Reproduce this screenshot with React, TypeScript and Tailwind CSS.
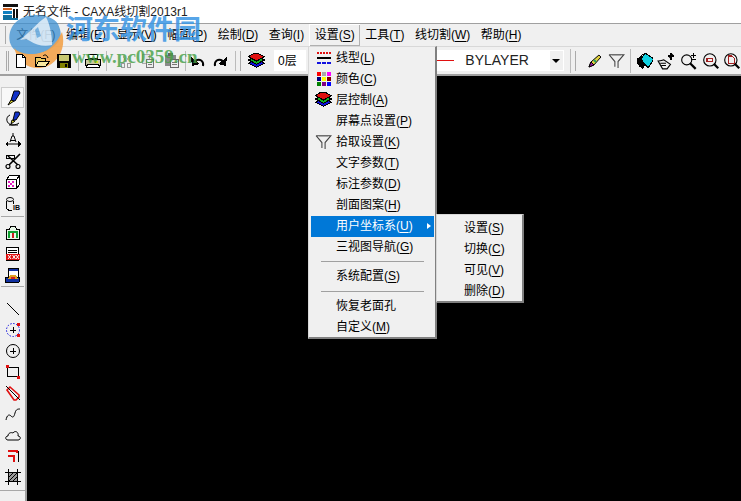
import React from 'react';

const font = { fontFamily: '"Liberation Sans", "Noto Sans CJK SC", sans-serif' };

// 16x16 toolbar glyphs, hand drawn from the screenshot
const Ico: React.FC<{ children: React.ReactNode; size?: number }> = ({ children, size = 16 }) => (
  <svg width={size} height={size} viewBox="0 0 16 16" fill="none" shapeRendering="crispEdges" className="block">
    {children}
  </svg>
);

const Layers = () => (
  <Ico size={17}>
    <path d="M0.5 10.5 8 14.5l7.5-4-3-1.5h-9z" fill="#1010e0" stroke="#000" />
    <path d="M0.5 7.5 8 11.5l7.5-4-3-1.5h-9z" fill="#10b020" stroke="#000" />
    <path d="M0.5 4.5 5 1.5h5l5.5 3L8 8.5z" fill="#e01010" stroke="#000" />
  </Ico>
);

const Funnel = () => (
  <Ico size={17}>
    <path d="M1 2.5h14L9.5 9v6M1 2.5 6.5 9v5" stroke="#444" shapeRendering="auto" />
    <path d="M3.5 3.5h9" stroke="#aaa" />
  </Ico>
);

const toolbarLeft = [
  <Ico key="new"><path d="M3.5 1.5h6l3 3v10h-9z" fill="#fff" stroke="#000" /><path d="M9.5 1.5v3h3" stroke="#000" /></Ico>,
  <Ico key="open"><path d="M1.5 4.5h5l1 1h4v8h-10z" fill="#e8c860" stroke="#000" /><path d="M4.5 8.5h11l-4 5h-10z" fill="#f8e8a0" stroke="#000" /><path d="M9 3c2-2 4-1 5 2" stroke="#000" shapeRendering="auto" /></Ico>,
  <Ico key="save"><path d="M1 1h14v14H1z" fill="#000" /><path d="M3 2h10v6H3z" fill="#c8c870" /><path d="M4 10h8v5H4z" fill="#808000" /><path d="M9 11h2v3H9z" fill="#000" /></Ico>,
];

const toolbarDim = [
  <Ico key="cut"><path d="M6 3l3 6M12 3 9 9" stroke="#b0b0b0" /><path d="M4 10h3v4H4zM10 10h3v4h-3z" stroke="#999" /></Ico>,
  <Ico key="copy"><path d="M2.5 1.5h7v9h-7z" fill="#e4e4e4" stroke="#aaa" /><path d="M6.5 6.5h7v8h-7z" fill="#eee" stroke="#777" /><path d="M8 9h4M8 11h4" stroke="#777" /></Ico>,
  <Ico key="paste"><path d="M1 2h11v11H1z" fill="#8a8a8a" /><path d="M6.5 6.5h8v8h-8z" fill="#eee" stroke="#666" /><path d="M4 0h5v3H4z" fill="#666" /><path d="M8 9h5M8 11h5" stroke="#777" /></Ico>,
];

const sideTop = [
  <Ico key="a"><path d="M9 1h5l1 2-5 8H6l1-4z" fill="#1030c8" stroke="#000" shapeRendering="auto" /><path d="M6 10l3 1-6 4z" fill="#f0e830" stroke="#000" shapeRendering="auto" /></Ico>,
  <Ico key="b"><path d="M5 4c-5 2-4 9 2 10 3 0 6-1 7-2M4 14h9" stroke="#000" shapeRendering="auto" /><path d="M10 1h4l1 2-4 6H8l1-4z" fill="#1030c8" stroke="#000" shapeRendering="auto" /><path d="M7 9l3 1-4 3z" fill="#f0e830" stroke="#000" shapeRendering="auto" /></Ico>,
  <Ico key="c"><path d="M5 10l2-6h2l2 6M5.5 8.5h5M8 1v3M1 12h14" stroke="#000" shapeRendering="auto" /><path d="M0 12l3-3v6zM16 12l-3-3v6z" fill="#000" /></Ico>,
  <Ico key="d"><path d="M1.5 2.5h8v3h-8z" stroke="#000" /><path d="M15 1 4 12M3 3l10 9" stroke="#000" strokeWidth="1.6" shapeRendering="auto" /><circle cx="3" cy="13.5" r="2" stroke="#000" strokeWidth="1.2" shapeRendering="auto" /><circle cx="13" cy="13.5" r="2" stroke="#000" strokeWidth="1.2" shapeRendering="auto" /></Ico>,
  <Ico key="e"><path d="M1.5 5.5h10v9h-10zM1.5 5.5l3-4h10v9l-3 4M11.5 5.5l3-4" fill="#fff" stroke="#000" /><path d="M1 5h11v10H1z" fill="#fff" /><path d="M1.5 5.5h10v9h-10z" stroke="#000" /><path d="M3 7h2v2H3zM7 7h2v2H7zM3 11h2v2H3zM7 11h2v2H7zM5 9h2v2H5z" fill="#e020c0" /></Ico>,
  <Ico key="f">
    <path d="M1.5 4.5v8l2 1.5h3M8.5 4.5V8" stroke="#000" />
    <ellipse cx="5" cy="3.5" rx="3.5" ry="2" stroke="#000" shapeRendering="auto" />
    <text x="8" y="14" fontSize="7" fontWeight="bold" fill="#000" fontFamily="Liberation Sans">IB</text>
  </Ico>,
];

const sideMid = [
  <Ico key="g"><path d="M1.5 4.5h3l1-3h5l1 3h3v10h-13z" fill="#e8f8e8" stroke="#000" /><path d="M3.5 13V6.5h8V13" stroke="#10a030" strokeWidth="2" /><path d="M7 8h2v5H7z" fill="#d02020" /></Ico>,
  <Ico key="h"><path d="M1.5 1.5h12v13h-12z" fill="#fff" stroke="#000" /><path d="M3 4h9M3 6h9" stroke="#000" /><path d="M1 8h14v6H1z" fill="#e01010" /><path d="M3 9l3 4M6 9l-3 4M7.5 9l3 4M10.5 9l-3 4M11 9l3 4M14 9l-3 4" stroke="#fff" shapeRendering="auto" /></Ico>,
  <Ico key="i"><path d="M3.5 1.5h10v10h-10z" fill="#fff" stroke="#000" /><path d="M4 2h9v2H4z" fill="#1030a0" /><path d="M1 10h14l-1 5H0z" fill="#1030a0" stroke="#000" /><path d="M5 8h6l2 4H3z" fill="#e0a020" /><path d="M6 10h4v2H6z" fill="#d02020" /></Ico>,
];

const sideBottom = [
  <Ico key="j"><path d="M2 2l12 12" stroke="#000" shapeRendering="auto" /></Ico>,
  <Ico key="k"><circle cx="8" cy="8" r="6.5" stroke="#1010e0" strokeDasharray="1.5 1.5" shapeRendering="auto" /><path d="M5 8h6M8 5v6" stroke="#000" /><path d="M12 1h3v3h-3zM12 12h3v3h-3z" fill="#e01010" /></Ico>,
  <Ico key="l"><circle cx="8" cy="8" r="6.5" stroke="#000" shapeRendering="auto" /><path d="M5 8h6M8 5v6" stroke="#000" /></Ico>,
  <Ico key="m"><path d="M2.5 3.5h11v9h-11z" stroke="#000" /><path d="M1 1h3v3H1zM12 12h3v3h-3z" fill="#e01010" /></Ico>,
  <Ico key="n"><path d="M2 5l3-3 9 8v2l-3 3h-2z" stroke="#e01010" strokeWidth="1.6" shapeRendering="auto" /><path d="M1 1l14 14" stroke="#000" shapeRendering="auto" /></Ico>,
  <Ico key="o"><path d="M1 14c1-5 3-6 5-4s3 1 4-3 3-4 5-4" stroke="#000" shapeRendering="auto" /></Ico>,
  <Ico key="p"><path d="M3 13c-3 0-3-4 0-4 0-3 3-4 5-3 2-3 6-1 5 3 3 0 3 4 0 4z" stroke="#000" shapeRendering="auto" /></Ico>,
  <Ico key="q"><path d="M3 3.5h10.5V14" stroke="#000" /><path d="M3 3h9v2M3 8h6v6" stroke="#e01010" strokeWidth="2" /></Ico>,
  <Ico key="r"><path d="M3.5 0v16M12.5 0v16M0 3.5h16M0 12.5h16" stroke="#000" /><path d="M4 4h8v8H4z" fill="#999" /><path d="M4 8l4-4M4 12l8-8M8 12l4-4" stroke="#000" shapeRendering="auto" /></Ico>,
];

const menuBar = [
  ['文件(', 'F', ')'],
  ['编辑(', 'E', ')'],
  ['显示(', 'V', ')'],
  ['幅面(', 'P', ')'],
  ['绘制(', 'D', ')'],
  ['查询(', 'I', ')'],
  ['设置(', 'S', ')'],
  ['工具(', 'T', ')'],
  ['线切割(', 'W', ')'],
  ['帮助(', 'H', ')'],
];

const Swatches = () => (
  <div className="grid grid-cols-3 gap-[1px] w-[14px] h-[14px]">
    {['bg-[#ff0000]', 'bg-[#a8a8a8]', 'bg-[#ff00ff]', 'bg-[#000080]', 'bg-[#ffff00]', 'bg-[#800000]', 'bg-[#008000]', 'bg-[#800080]', 'bg-[#0000ff]'].map((c, i) => (
      <div key={i} className={c} />
    ))}
  </div>
);

const LineType = () => (
  <Ico>
    <path d="M1 3h14" stroke="#e01010" strokeWidth="2" strokeDasharray="2 1" />
    <path d="M1 8h14" stroke="#000" strokeWidth="2" />
    <path d="M1 13h14" stroke="#1010e0" strokeWidth="2" strokeDasharray="4 1" />
  </Ico>
);

type Row = { t?: string; k?: string; icon?: React.ReactNode; sel?: boolean; sep?: boolean };

const settings: Row[] = [
  { t: '线型(', k: 'L', icon: <LineType /> },
  { t: '颜色(', k: 'C', icon: <Swatches /> },
  { t: '层控制(', k: 'A', icon: <Layers /> },
  { t: '屏幕点设置(', k: 'P' },
  { t: '拾取设置(', k: 'K', icon: <Funnel /> },
  { t: '文字参数(', k: 'T' },
  { t: '标注参数(', k: 'D' },
  { t: '剖面图案(', k: 'H' },
  { t: '用户坐标系(', k: 'U', sel: true },
  { t: '三视图导航(', k: 'G' },
  { sep: true },
  { t: '系统配置(', k: 'S' },
  { sep: true },
  { t: '恢复老面孔' },
  { t: '自定义(', k: 'M' },
];

const coords = [
  ['设置(', 'S'],
  ['切换(', 'C'],
  ['可见(', 'V'],
  ['删除(', 'D'],
];

const Label: React.FC<{ t: string; k?: string }> = ({ t, k }) => (
  <span>
    {t}
    {k && (
      <>
        <span className="underline underline-offset-2">{k}</span>)
      </>
    )}
  </span>
);

const App: React.FC = () => {
  return (
    <div className="relative w-[741px] h-[501px] overflow-hidden bg-white flex flex-col text-[12px] text-black" style={font}>
      {/* title bar */}
      <div className="h-[23px] flex items-center pl-[3px] gap-[5px] text-[#222]">
        <svg width="15" height="16" viewBox="0 0 15 16" shapeRendering="crispEdges">
          <path d="M0 0h15v3H0z" fill="#111" />
          <path d="M0 4h9v2H0z" fill="#d06020" />
          <path d="M0 7h9v3H0z" fill="#1080c0" />
          <path d="M0 11h9v3H0zM0 14h15v2H0z" fill="#1070a0" />
          <path d="M10 5h2v9h-2zM13 5h2v9h-2z" fill="#111" />
        </svg>
        <span>无名文件 - CAXA线切割2013r1</span>
      </div>
      <div className="h-px bg-[#a0a0a0]" />

      {/* menu bar */}
      <div className="h-[23px] bg-[#f0f0f0] border-b border-[#d8d8d8] flex items-center pl-[5px]">
        <div className="w-[2px] h-[18px] border-l border-[#aaa] mr-[4px]" />
        {menuBar.map(([a, k, b]) => (
          <div key={k + a} className={`px-[5.25px] h-[22px] flex items-center whitespace-nowrap ${k === 'S' ? 'shadow-[inset_1px_1px_0_#fff,inset_-1px_-1px_0_#b0b0b0]' : ''}`}>
            <span>{a}<span className="underline underline-offset-2">{k}</span>{b}</span>
          </div>
        ))}
      </div>

      {/* toolbar */}
      <div className="h-[29px] bg-[#f0f0f0] border-b-[2px] border-[#a0a0a0] flex items-center pl-[6px]">
        <div className="w-[3px] h-[20px] border-l border-[#aaa] border-r mr-[1px]" />
        {toolbarLeft.map((x, i) => <div key={i} className="relative z-10 w-[21.5px] flex justify-center">{x}</div>)}
        <div className="w-px h-[20px] bg-[#bbb] mx-[3.5px]" />
        <div className="w-[22px] flex justify-center">
          <Ico size={18}><path d="M4 2h8v4H4z" fill="#fff" stroke="#000" /><path d="M1 7h14v5H1z" fill="#c8c8a0" stroke="#000" /><path d="M3 11h10l1 3H2z" fill="#fff" stroke="#000" /><path d="M9 8h3v2H9z" fill="#e0e020" /></Ico>
        </div>
        <div className="w-px h-[20px] bg-[#bbb] ml-[2px] mr-[3px]" />
        <div className="w-[3px]" />
        {toolbarDim.map((x, i) => <div key={i} className="w-[23.5px] flex justify-center">{x}</div>)}
        <div className="w-px h-[20px] bg-[#bbb] mx-[1.5px]" />
        <div className="w-[22px] flex justify-center">
          <Ico><path d="M13 13c1-5-3-8-8-5L3 10" stroke="#000" strokeWidth="2" shapeRendering="auto" /><path d="M1 4l1 9 8-2z" fill="#000" /></Ico>
        </div>
        <div className="w-[22px] flex justify-center">
          <Ico><path d="M3 13C2 8 6 5 11 8l2 2" stroke="#000" strokeWidth="2" shapeRendering="auto" /><path d="M15 4l-1 9-8-2z" fill="#000" /></Ico>
        </div>
        <div className="w-px h-[20px] bg-[#bbb] ml-[4px] mr-[3px]" />
        <div className="w-[2px] h-[20px] border-r border-[#aaa] mr-[7px]" />
        <Layers />
        <div className="w-[32px] h-[21px] bg-white ml-[9px] flex items-center pl-[4px]">0层</div>
        <div className="w-[112px]" />
        {/* line type combo */}
        <div className="w-[130px] h-[21px] bg-white flex items-center ml-[17px] mr-[6px]">
          <div className="w-[20px] h-px bg-[#e01010]" />
          <span className="ml-[11px] text-[14px] text-[#222]">BYLAYER</span>
          <div className="ml-auto mr-px w-[13px] h-[19px] bg-[#f0f0f0] flex items-center justify-center">
            <div className="w-0 h-0 border-l-[4px] border-r-[4px] border-t-[4px] border-l-transparent border-r-transparent border-t-black" />
          </div>
        </div>
        <div className="w-px h-[24px] bg-[#bbb] mr-[3px]" />
        <div className="w-[2px] h-[20px] border-r border-[#aaa] mr-[11px]" />
        <Ico><path d="M2 14l2-5 8-7 2 2-7 8z" fill="#e0d040" stroke="#000" shapeRendering="auto" /><path d="M2 14l2-5 3 3z" fill="#a020a0" stroke="#000" shapeRendering="auto" /><path d="M7 7l2 2" stroke="#20a060" strokeWidth="2" shapeRendering="auto" /></Ico>
        <div className="w-[5px]" />
        <Funnel />
        <div className="w-px h-[24px] bg-[#bbb] mx-[5px]" />
        <Ico size={18}><path d="M4 7l4-6 8 5-5 8z" fill="#10d0e0" stroke="#000" /><path d="M1 6c-1 4 1 7 5 9l2-3-3-7 1-3z" fill="#000" /></Ico>
        <div className="w-[4px]" />
        <Ico size={18}><path d="M1 8c3 0 4-1 5-1l6 4-3 4H5zM3 10h5M4 12h4" stroke="#000" shapeRendering="auto" /><path d="M11 5l3-3" stroke="#000" strokeWidth="1.5" shapeRendering="auto" /><path d="M12 1h1v6h-1zM10 3h5v1h-5z" fill="#000" /></Ico>
        <div className="w-[5px]" />
        <Ico size={18}><circle cx="6" cy="7" r="4.5" stroke="#000" shapeRendering="auto" /><path d="M9 10l5 5" stroke="#000" strokeWidth="2" shapeRendering="auto" /><path d="M12 1v4M10 3h4M10 7h4" stroke="#000" /></Ico>
        <div className="w-[4px]" />
        <Ico size={18}><circle cx="7" cy="7" r="5.5" stroke="#000" shapeRendering="auto" /><path d="M10.5 10.5l4 4" stroke="#000" strokeWidth="2" shapeRendering="auto" /><path d="M4.5 5.5h5v3h-5z" stroke="#a02020" /></Ico>
        <div className="w-[3px]" />
        <Ico size={18}><circle cx="7" cy="7" r="5.5" stroke="#000" shapeRendering="auto" /><path d="M10.5 10.5l4 4" stroke="#000" strokeWidth="2" shapeRendering="auto" /><path d="M5 3.5h3l2 2v5H5z" stroke="#a02020" /></Ico>
      </div>

      {/* body */}
      <div className="flex-1 flex min-h-0">
        <div className="w-[27px] bg-[#f0f0f0] border-r-[2px] border-[#a0a0a0] flex flex-col">
          <div className="h-[11px] shrink-0" />
          {sideTop.map((x, i) => (
            <div key={i} className={`h-[21.2px] shrink-0 flex items-center justify-center ${i === 0 ? 'bg-[#f8f8f8] border border-[#ccc] mx-[1px]' : ''}`}>{x}</div>
          ))}
          <div className="h-px bg-[#a8a8a8] mx-[1px] my-[2px] shrink-0" />
          <div className="h-[3px] shrink-0" />
          {sideMid.map((x, i) => (
            <div key={i} className="h-[21px] shrink-0 flex items-center justify-center">{x}</div>
          ))}
          <div className="h-px bg-[#a8a8a8] mx-[1px] mt-[1px] shrink-0" />
          <div className="h-[11px] shrink-0" />
          {sideBottom.map((x, i) => (
            <div key={i} className="h-[21.1px] shrink-0 flex items-center justify-center">{x}</div>
          ))}
          <div className="h-px bg-[#a8a8a8] mt-[2px] shrink-0" />
        </div>
        <div className="flex-1 bg-black" />
      </div>

      {/* open menu */}
      <div className="absolute left-[308px] top-[46px] w-[129px] h-[293px] bg-[#f0f0f0] border border-[#d8d8d8] border-r-[2px] border-b-[2px] border-r-[#808080] border-b-[#808080] pl-[2px] pr-[1px]">
        {settings.map((r, i) =>
          r.sep ? (
            <div key={i} className="h-[8px] flex items-center pl-[10px] pr-[10px]"><div className="h-px w-full bg-[#a0a0a0]" /></div>
          ) : (
            <div key={i} className={`h-[21.1px] flex items-center relative ${r.sel ? 'bg-[#0078d7] text-white' : ''}`}>
              <div className="w-[25px] flex justify-center shrink-0">{r.icon}</div>
              <Label t={r.t!} k={r.k} />
              {r.sel && <div className="absolute right-[3px] w-0 h-0 border-t-[3px] border-b-[3px] border-l-[4px] border-t-transparent border-b-transparent border-l-white" />}
            </div>
          ),
        )}
      </div>

      {/* submenu */}
      <div className="absolute left-[436px] top-[214px] w-[88px] h-[89px] bg-[#f0f0f0] border border-[#d8d8d8] border-r-[2px] border-b-[2px] border-r-[#808080] border-b-[#808080] pt-[2px] pl-[27px]">
        {coords.map(([t, k]) => (
          <div key={k} className="h-[21px] flex items-center"><Label t={t} k={k} /></div>
        ))}
      </div>

      {/* watermark */}
      <div className="absolute left-[8px] top-[14px] pointer-events-none">
        <svg width="58" height="56" viewBox="0 0 58 56">
          <path d="M14 4C24-1 44 0 50 10c5 10 3 18-6 24-10 7-24 8-32 5C2 35 0 26 2 18 4 11 8 7 14 4z" fill="#3b8fd2" fillOpacity="0.75" />
          <path d="M6 34c8 8 26 8 36 0 6-5 9-10 12-16 4 14-2 28-14 34-12 5-28 2-34-18z" fill="#f2a24a" fillOpacity="0.9" />
          <path d="M12 26C20 20 30 8 38 3c4 8 6 18 6 28-8 2-16 0-22-4-3-2-6-2-10-1z" fill="#fff" fillOpacity="0.7" />
          <path d="M27 16l3-3 3 9-4 2z" fill="#3b8fd2" fillOpacity="0.6" />
        </svg>
      </div>
      <div className="absolute left-[66px] top-[12px] text-[27px] leading-[36px] font-bold text-[#3a96e4] opacity-85 pointer-events-none">河东软件园</div>
      <div className="absolute left-[72px] top-[46px] text-[19px] leading-[22px] font-bold text-[#45a045] opacity-80 pointer-events-none whitespace-nowrap" style={{ fontFamily: '"Liberation Serif", serif' }}>
        www.pc0359.cn
      </div>
    </div>
  );
};

export default App;
